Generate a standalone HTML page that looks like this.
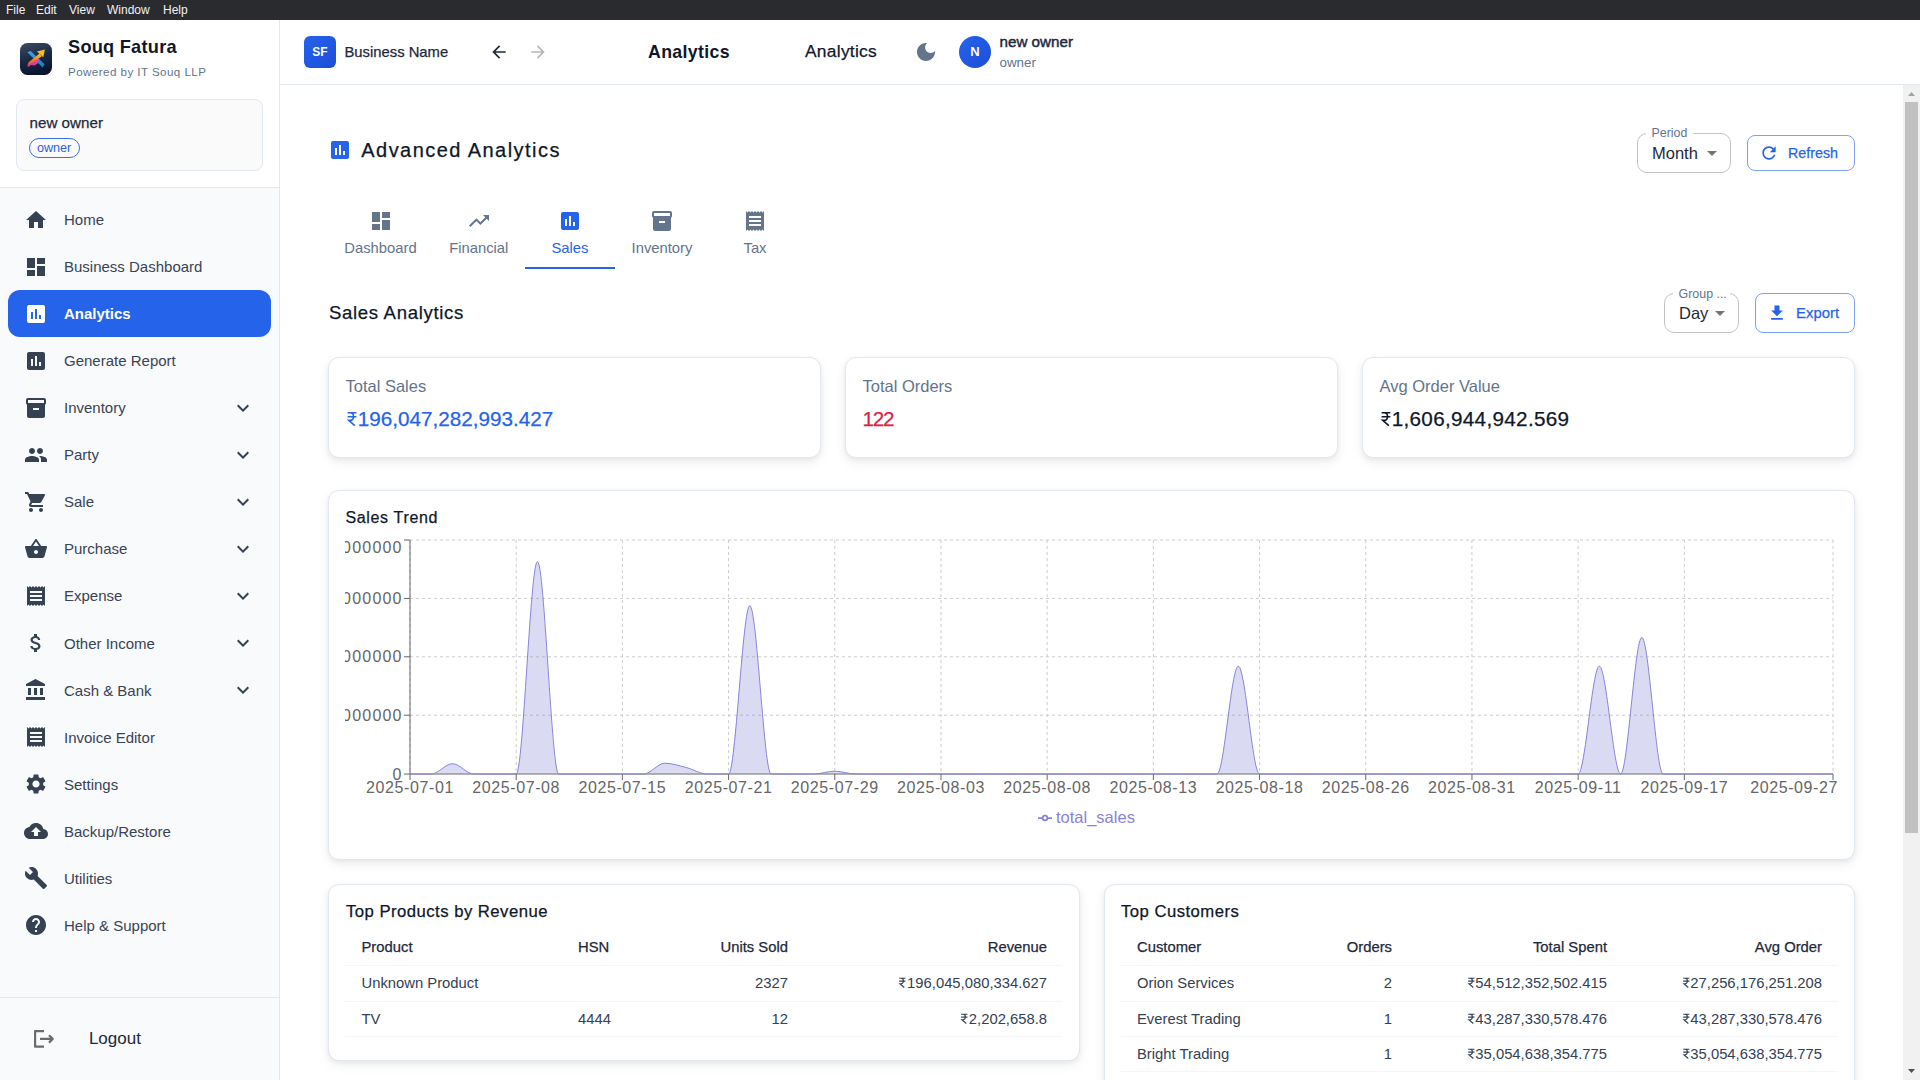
<!DOCTYPE html><html><head><meta charset="utf-8"><title>Souq Fatura - Analytics</title><style>
*{box-sizing:border-box}
html,body{margin:0;padding:0;width:1920px;height:1080px;overflow:hidden;background:#fff;font-family:"Liberation Sans",sans-serif}
.t{position:absolute;white-space:nowrap;line-height:1}
.ic{position:absolute;display:block}
.box{position:absolute}
.inr{display:inline-block;width:0.56em;height:0.74em;vertical-align:0;margin-right:0.03em}
.med{-webkit-text-stroke:0.25px currentColor}
</style></head><body>
<div class="box" style="left:0;top:0;width:1920px;height:20px;background:#2a2b2f"></div>
<div class="t " style="left:6px;top:4px;font-size:12px;color:#f2f2f2;font-weight:400;">File</div>
<div class="t " style="left:36px;top:4px;font-size:12px;color:#f2f2f2;font-weight:400;">Edit</div>
<div class="t " style="left:69px;top:4px;font-size:12px;color:#f2f2f2;font-weight:400;">View</div>
<div class="t " style="left:107px;top:4px;font-size:12px;color:#f2f2f2;font-weight:400;">Window</div>
<div class="t " style="left:163px;top:4px;font-size:12px;color:#f2f2f2;font-weight:400;">Help</div>
<div class="box" style="left:0;top:20px;width:280px;height:1060px;background:#f8fafc;border-right:1px solid #e2e8f0"></div>
<div class="box" style="left:0;top:20px;width:279px;height:168px;background:#fff;border-bottom:1px solid #e2e8f0"></div>
<svg class="ic" style="left:20px;top:43px;width:32px;height:32px" viewBox="0 0 32 32">
<defs><linearGradient id="lg" x1="0" y1="0" x2="0.3" y2="1"><stop offset="0" stop-color="#3b4d63"/><stop offset="0.55" stop-color="#1a2a44"/><stop offset="1" stop-color="#0a1631"/></linearGradient>
<linearGradient id="ar" x1="0" y1="1" x2="1" y2="0"><stop offset="0" stop-color="#ef4d2a"/><stop offset="0.45" stop-color="#f97a22"/><stop offset="1" stop-color="#fcc324"/></linearGradient>
<linearGradient id="bl" x1="0" y1="0" x2="1" y2="1"><stop offset="0" stop-color="#43a0e6"/><stop offset="1" stop-color="#1f78c0"/></linearGradient>
<linearGradient id="mg" x1="0" y1="1" x2="1" y2="0"><stop offset="0" stop-color="#b03a9a"/><stop offset="1" stop-color="#ec4899"/></linearGradient></defs>
<rect x="0" y="0" width="32" height="32" rx="7.5" fill="url(#lg)"/>
<path d="M7.3 9.3 L10.8 7.9 L24.6 21.3 L22.6 24.6 Z" fill="url(#bl)"/>
<path d="M7.4 24.6 L8.4 20.6 L19.4 15.6 L17.6 20.6 L14.6 22.6 L11.2 21.9 Z" fill="url(#mg)"/>
<path d="M7.3 22.8 L8.6 19.2 L19.6 10.6 L21.6 13.4 L9.6 21.2 Z" fill="url(#ar)"/>
<path d="M16.9 8.6 L24.9 6.6 L23.3 14.2 Z" fill="#fbbc24"/>
</svg>
<div class="t " style="left:68px;top:38px;font-size:18.2px;color:#0f172a;font-weight:700;letter-spacing:0.25px">Souq Fatura</div>
<div class="t " style="left:68px;top:66px;font-size:11.6px;color:#64748b;font-weight:400;letter-spacing:0.44px">Powered by IT Souq LLP</div>
<div class="box" style="left:16px;top:99px;width:247px;height:72px;background:#fafafa;border:1px solid #e2e8f0;border-radius:8px"></div>
<div class="t med" style="left:29.5px;top:115px;font-size:15.2px;color:#1e293b;font-weight:400;">new owner</div>
<div class="box" style="left:29px;top:138px;width:51px;height:20px;border:1px solid #3b6ef0;border-radius:10px"></div>
<div class="t " style="left:37px;top:142px;font-size:12.6px;color:#2f5fe0;font-weight:400;">owner</div>
<svg class="ic" style="left:24px;top:208px;width:24px;height:24px" viewBox="0 0 24 24"><path fill="#364152" d="M10 20v-6h4v6h5v-8h3L12 3 2 12h3v8z"/></svg>
<div class="t " style="left:64px;top:212px;font-size:15px;color:#3a4354;font-weight:400;">Home</div>
<svg class="ic" style="left:24px;top:255px;width:24px;height:24px" viewBox="0 0 24 24"><path fill="#364152" d="M3 13h8V3H3v10zm0 8h8v-6H3v6zm10 0h8V11h-8v10zm0-18v6h8V3h-8z"/></svg>
<div class="t " style="left:64px;top:259px;font-size:15px;color:#3a4354;font-weight:400;">Business Dashboard</div>
<div class="box" style="left:8px;top:290px;width:263px;height:47px;background:#2563eb;border-radius:12px"></div>
<svg class="ic" style="left:24px;top:302px;width:24px;height:24px" viewBox="0 0 24 24"><path fill="#ffffff" d="M19 3H5c-1.1 0-2 .9-2 2v14c0 1.1.9 2 2 2h14c1.1 0 2-.9 2-2V5c0-1.1-.9-2-2-2zM9 17H7v-7h2v7zm4 0h-2V7h2v10zm4 0h-2v-4h2v4z"/></svg>
<div class="t " style="left:64px;top:306px;font-size:15px;color:#ffffff;font-weight:700;">Analytics</div>
<svg class="ic" style="left:24px;top:349px;width:24px;height:24px" viewBox="0 0 24 24"><path fill="#364152" d="M19 3H5c-1.1 0-2 .9-2 2v14c0 1.1.9 2 2 2h14c1.1 0 2-.9 2-2V5c0-1.1-.9-2-2-2zM9 17H7v-7h2v7zm4 0h-2V7h2v10zm4 0h-2v-4h2v4z"/></svg>
<div class="t " style="left:64px;top:353px;font-size:15px;color:#3a4354;font-weight:400;">Generate Report</div>
<svg class="ic" style="left:24px;top:396px;width:24px;height:24px" viewBox="0 0 24 24"><path fill="#364152" d="M20 2H4c-1 0-2 .9-2 2v3.01c0 .72.43 1.34 1 1.69V20c0 1.1 1.1 2 2 2h14c.9 0 2-.9 2-2V8.7c.57-.35 1-.97 1-1.69V4c0-1.1-1-2-2-2zm-5 12H9v-2h6v2zm5-7H4V4l16-.02V7z"/></svg>
<div class="t " style="left:64px;top:400px;font-size:15px;color:#3a4354;font-weight:400;">Inventory</div>
<svg class="ic" style="left:231px;top:396px;width:24px;height:24px" viewBox="0 0 24 24"><path fill="#364152" d="M16.59 8.59L12 13.17 7.41 8.59 6 10l6 6 6-6z"/></svg>
<svg class="ic" style="left:24px;top:443px;width:24px;height:24px" viewBox="0 0 24 24"><path fill="#364152" d="M16 11c1.66 0 2.99-1.34 2.99-3S17.66 5 16 5c-1.66 0-3 1.34-3 3s1.34 3 3 3zm-8 0c1.66 0 2.99-1.34 2.99-3S9.66 5 8 5C6.34 5 5 6.34 5 8s1.34 3 3 3zm0 2c-2.33 0-7 1.17-7 3.5V19h14v-2.5c0-2.33-4.67-3.5-7-3.5zm8 0c-.29 0-.62.02-.97.05 1.16.84 1.97 1.97 1.97 3.45V19h6v-2.5c0-2.33-4.67-3.5-7-3.5z"/></svg>
<div class="t " style="left:64px;top:447px;font-size:15px;color:#3a4354;font-weight:400;">Party</div>
<svg class="ic" style="left:231px;top:443px;width:24px;height:24px" viewBox="0 0 24 24"><path fill="#364152" d="M16.59 8.59L12 13.17 7.41 8.59 6 10l6 6 6-6z"/></svg>
<svg class="ic" style="left:24px;top:490px;width:24px;height:24px" viewBox="0 0 24 24"><path fill="#364152" d="M7 18c-1.1 0-1.99.9-1.99 2S5.9 22 7 22s2-.9 2-2-.9-2-2-2zM1 2v2h2l3.6 7.59-1.35 2.45c-.16.28-.25.61-.25.96 0 1.1.9 2 2 2h12v-2H7.42c-.14 0-.25-.11-.25-.25l.03-.12.9-1.63h7.45c.75 0 1.410-.41 1.75-1.03l3.58-6.49c.08-.14.12-.31.12-.48 0-.55-.45-1-1-1H5.21l-.94-2H1zm16 16c-1.1 0-1.99.9-1.99 2s.89 2 1.990 2 2-.9 2-2-.9-2-2-2z"/></svg>
<div class="t " style="left:64px;top:494px;font-size:15px;color:#3a4354;font-weight:400;">Sale</div>
<svg class="ic" style="left:231px;top:490px;width:24px;height:24px" viewBox="0 0 24 24"><path fill="#364152" d="M16.59 8.59L12 13.17 7.41 8.59 6 10l6 6 6-6z"/></svg>
<svg class="ic" style="left:24px;top:537px;width:24px;height:24px" viewBox="0 0 24 24"><path fill="#364152" d="M17.21 9l-4.38-6.56c-.19-.28-.51-.42-.83-.42-.32 0-.64.14-.83.43L6.79 9H2c-.55 0-1 .45-1 1 0 .09.01.18.04.27l2.54 9.27c.23.84 1 1.46 1.92 1.46h13c.92 0 1.690-.62 1.93-1.46l2.54-9.27L23 10c0-.55-.45-1-1-1h-4.79zM9 9l3-4.4L15 9H9zm3 8c-1.1 0-2-.9-2-2s.9-2 2-2 2 .9 2 2-.9 2-2 2z"/></svg>
<div class="t " style="left:64px;top:541px;font-size:15px;color:#3a4354;font-weight:400;">Purchase</div>
<svg class="ic" style="left:231px;top:537px;width:24px;height:24px" viewBox="0 0 24 24"><path fill="#364152" d="M16.59 8.59L12 13.17 7.41 8.59 6 10l6 6 6-6z"/></svg>
<svg class="ic" style="left:24px;top:584px;width:24px;height:24px" viewBox="0 0 24 24"><path fill="#364152" d="M18 17H6v-2h12v2zm0-4H6v-2h12v2zm0-4H6V7h12v2zM3 22l1.5-1.5L6 22l1.5-1.5L9 22l1.5-1.5L12 22l1.5-1.5L15 22l1.5-1.5L18 22l1.5-1.5L21 22V2l-1.5 1.5L18 2l-1.5 1.5L15 2l-1.5 1.5L12 2l-1.5 1.5L9 2 7.5 3.5 6 2 4.5 3.5 3 2v20z"/></svg>
<div class="t " style="left:64px;top:588px;font-size:15px;color:#3a4354;font-weight:400;">Expense</div>
<svg class="ic" style="left:231px;top:584px;width:24px;height:24px" viewBox="0 0 24 24"><path fill="#364152" d="M16.59 8.59L12 13.17 7.41 8.59 6 10l6 6 6-6z"/></svg>
<svg class="ic" style="left:24px;top:631px;width:24px;height:24px" viewBox="0 0 24 24"><path fill="#364152" d="M11.8 10.9c-2.27-.59-3-1.2-3-2.15 0-1.09 1.01-1.85 2.7-1.85 1.78 0 2.44.85 2.5 2.1h2.21c-.07-1.72-1.12-3.3-3.21-3.81V3h-3v2.16c-1.94.42-3.5 1.68-3.5 3.61 0 2.310 1.91 3.46 4.7 4.13 2.5.6 3 1.48 3 2.41 0 .69-.49 1.79-2.7 1.79-2.06 0-2.87-.92-2.98-2.1h-2.2c.12 2.19 1.76 3.42 3.68 3.83V21h3v-2.15c1.95-.37 3.5-1.5 3.5-3.55 0-2.84-2.43-3.81-4.7-4.4z"/></svg>
<div class="t " style="left:64px;top:636px;font-size:15px;color:#3a4354;font-weight:400;">Other Income</div>
<svg class="ic" style="left:231px;top:631px;width:24px;height:24px" viewBox="0 0 24 24"><path fill="#364152" d="M16.59 8.59L12 13.17 7.41 8.59 6 10l6 6 6-6z"/></svg>
<svg class="ic" style="left:24px;top:678px;width:24px;height:24px" viewBox="0 0 24 24"><path fill="#364152" d="M4 10v7h3v-7H4zm6 0v7h3v-7h-3zM2 22h19v-3H2v3zm14-12v7h3v-7h-3zm-4.5-9L2 6v2h19V6l-9.5-5z"/></svg>
<div class="t " style="left:64px;top:683px;font-size:15px;color:#3a4354;font-weight:400;">Cash &amp; Bank</div>
<svg class="ic" style="left:231px;top:678px;width:24px;height:24px" viewBox="0 0 24 24"><path fill="#364152" d="M16.59 8.59L12 13.17 7.41 8.59 6 10l6 6 6-6z"/></svg>
<svg class="ic" style="left:24px;top:725px;width:24px;height:24px" viewBox="0 0 24 24"><path fill="#364152" d="M18 17H6v-2h12v2zm0-4H6v-2h12v2zm0-4H6V7h12v2zM3 22l1.5-1.5L6 22l1.5-1.5L9 22l1.5-1.5L12 22l1.5-1.5L15 22l1.5-1.5L18 22l1.5-1.5L21 22V2l-1.5 1.5L18 2l-1.5 1.5L15 2l-1.5 1.5L12 2l-1.5 1.5L9 2 7.5 3.5 6 2 4.5 3.5 3 2v20z"/></svg>
<div class="t " style="left:64px;top:730px;font-size:15px;color:#3a4354;font-weight:400;">Invoice Editor</div>
<svg class="ic" style="left:24px;top:772px;width:24px;height:24px" viewBox="0 0 24 24"><path fill="#364152" d="M19.14 12.94c.04-.3.06-.61.06-.94 0-.32-.02-.64-.07-.94l2.03-1.58c.18-.14.23-.41.12-.61l-1.92-3.32c-.12-.22-.37-.29-.59-.22l-2.39.96c-.5-.38-1.03-.7-1.62-.94l-.36-2.54c-.04-.24-.24-.41-.48-.41h-3.84c-.24 0-.43.17-.47.41l-.36 2.54c-.59.24-1.13.57-1.62.94l-2.39-.96c-.22-.08-.47 0-.59.22L2.74 8.87c-.12.21-.08.47.12.61l2.03 1.58c-.05.3-.09.63-.09.94s.02.64.07.94l-2.03 1.58c-.18.14-.23.41-.12.61l1.92 3.32c.12.22.37.29.59.22l2.39-.96c.5.38 1.03.7 1.62.94l.36 2.54c.05.24.24.41.48.41h3.84c.24 0 .44-.17.47-.41l.36-2.54c.59-.24 1.13-.56 1.62-.94l2.39.96c.22.08.47 0 .59-.22l1.92-3.32c.12-.22.07-.47-.12-.61l-2.01-1.58zM12 15.6c-1.98 0-3.6-1.62-3.6-3.6s1.62-3.6 3.6-3.6 3.6 1.62 3.6 3.6-1.62 3.6-3.6 3.6z"/></svg>
<div class="t " style="left:64px;top:777px;font-size:15px;color:#3a4354;font-weight:400;">Settings</div>
<svg class="ic" style="left:24px;top:819px;width:24px;height:24px" viewBox="0 0 24 24"><path fill="#364152" d="M19.35 10.04C18.67 6.59 15.64 4 12 4 9.11 4 6.6 5.64 5.35 8.04 2.34 8.36 0 10.91 0 14c0 3.31 2.69 6 6 6h13c2.76 0 5-2.24 5-5 0-2.64-2.05-4.78-4.65-4.96zM14 13v4h-4v-4H7l5-5 5 5h-3z"/></svg>
<div class="t " style="left:64px;top:824px;font-size:15px;color:#3a4354;font-weight:400;">Backup/Restore</div>
<svg class="ic" style="left:24px;top:866px;width:24px;height:24px" viewBox="0 0 24 24"><path fill="#364152" d="M22.7 19l-9.1-9.1c.9-2.3.4-5-1.5-6.9-2-2-5-2.4-7.4-1.3L9 6 6 9 1.6 4.7C.4 7.1.9 10.1 2.9 12.1c1.9 1.9 4.6 2.4 6.9 1.5l9.1 9.1c.4.4 1 .4 1.4 0l2.3-2.3c.5-.4.5-1.1.1-1.4z"/></svg>
<div class="t " style="left:64px;top:871px;font-size:15px;color:#3a4354;font-weight:400;">Utilities</div>
<svg class="ic" style="left:24px;top:913px;width:24px;height:24px" viewBox="0 0 24 24"><path fill="#364152" d="M12 2C6.48 2 2 6.48 2 12s4.48 10 10 10 10-4.48 10-10S17.52 2 12 2zm1 17h-2v-2h2v2zm2.07-7.75l-.9.92C13.45 12.9 13 13.5 13 15h-2v-.5c0-1.1.45-2.1 1.17-2.83l1.24-1.26c.37-.36.59-.86.59-1.41 0-1.1-.9-2-2-2s-2 .9-2 2H8c0-2.21 1.79-4 4-4s4 1.79 4 4c0 .88-.36 1.68-.93 2.25z"/></svg>
<div class="t " style="left:64px;top:918px;font-size:15px;color:#3a4354;font-weight:400;">Help &amp; Support</div>
<div class="box" style="left:0;top:997px;width:279px;height:1px;background:#e2e8f0"></div>
<svg class="ic" style="left:32px;top:1027px;width:24px;height:24px" viewBox="0 0 24 24"><path d="M12 4.1H3.1V19.7H12M8 11.9H20.6M17 8.2L20.7 11.9L17 15.6" fill="none" stroke="#6b6b6b" stroke-width="2.2" stroke-linejoin="round"/></svg>
<div class="t " style="left:88.9px;top:1030px;font-size:17px;color:#1e293b;font-weight:400;">Logout</div>
<div class="box" style="left:280px;top:20px;width:1640px;height:65px;background:#fff;border-bottom:1px solid #e2e8f0"></div>
<div class="box" style="left:304px;top:36px;width:32px;height:32px;border-radius:6px;background:linear-gradient(135deg,#2563eb,#1d4ed8)"></div>
<div class="t" style="left:20px;width:600px;text-align:center;top:46px;font-size:12px;color:#fff;font-weight:700;">SF</div>
<div class="t med" style="left:344.5px;top:45px;font-size:14.8px;color:#1e293b;font-weight:400;">Business Name</div>
<svg class="ic" style="left:488.5px;top:42px;width:20px;height:20px" viewBox="0 0 24 24"><path fill="#1e293b" d="M20 11H7.83l5.59-5.59L12 4l-8 8 8 8 1.41-1.41L7.83 13H20v-2z"/></svg>
<svg class="ic" style="left:527.5px;top:42px;width:20px;height:20px" viewBox="0 0 24 24"><path fill="#b8b8b8" d="M12 4l-1.41 1.41L16.17 11H4v2h12.17l-5.58 5.59L12 20l8-8z"/></svg>
<div class="t " style="left:648px;top:44px;font-size:17.7px;color:#0f172a;font-weight:700;letter-spacing:0.37px">Analytics</div>
<div class="t med" style="left:805px;top:43px;font-size:17.4px;color:#0f172a;font-weight:400;letter-spacing:0.27px">Analytics</div>
<svg class="ic" style="left:914px;top:40px;width:24px;height:24px" viewBox="0 0 24 24"><path fill="#64748b" d="M12 3c-4.97 0-9 4.03-9 9s4.03 9 9 9 9-4.03 9-9c0-.46-.04-.92-.1-1.36-.98 1.37-2.58 2.26-4.4 2.26-2.98 0-5.4-2.42-5.4-5.4 0-1.81.89-3.42 2.26-4.4-.44-.06-.9-.1-1.36-.1z"/></svg>
<div class="box" style="left:959px;top:36px;width:32px;height:32px;border-radius:50%;background:linear-gradient(135deg,#2563eb,#1d4ed8)"></div>
<div class="t" style="left:675px;width:600px;text-align:center;top:45px;font-size:13px;color:#fff;font-weight:700;">N</div>
<div class="t " style="left:999.5px;top:34px;font-size:15.2px;color:#1e293b;font-weight:400;-webkit-text-stroke:0.45px #1e293b">new owner</div>
<div class="t " style="left:999.5px;top:56px;font-size:13.4px;color:#64748b;font-weight:400;">owner</div>
<div class="box" style="left:1903px;top:85px;width:17px;height:995px;background:#f1f1f1"></div>
<div class="box" style="left:1905px;top:102px;width:13px;height:731px;background:#c1c1c1"></div>
<svg class="ic" style="left:1903px;top:85px;width:17px;height:17px" viewBox="0 0 17 17"><path d="M5 11h7l-3.5-4z" fill="#a3a3a3"/></svg>
<svg class="ic" style="left:1903px;top:1063px;width:17px;height:17px" viewBox="0 0 17 17"><path d="M5 6h7l-3.5 4z" fill="#505050"/></svg>
<svg class="ic" style="left:328px;top:138px;width:24px;height:24px" viewBox="0 0 24 24"><path fill="#2563eb" d="M19 3H5c-1.1 0-2 .9-2 2v14c0 1.1.9 2 2 2h14c1.1 0 2-.9 2-2V5c0-1.1-.9-2-2-2zM9 17H7v-7h2v7zm4 0h-2V7h2v10zm4 0h-2v-4h2v4z"/></svg>
<div class="t med" style="left:361.3px;top:140px;font-size:20px;color:#0f172a;font-weight:400;letter-spacing:1.45px">Advanced Analytics</div>
<div class="box" style="left:1637px;top:133px;width:94px;height:40px;border:1px solid #c4c4c4;border-radius:10px"></div>
<div class="box" style="left:1646px;top:128px;width:47px;height:8px;background:#fff"></div>
<div class="t " style="left:1651.5px;top:127px;font-size:12.4px;color:#64748b;font-weight:400;">Period</div>
<div class="t " style="left:1652px;top:145px;font-size:16.5px;color:#1e293b;font-weight:400;">Month</div>
<svg class="ic" style="left:1700px;top:141px;width:24px;height:24px" viewBox="0 0 24 24"><path d="M7 10l5 5 5-5z" fill="#757575"/></svg>
<div class="box" style="left:1747px;top:135px;width:108px;height:36px;border:1px solid #7ea1f3;border-radius:8px"></div>
<svg class="ic" style="left:1759px;top:143px;width:20px;height:20px" viewBox="0 0 24 24"><path fill="#2563eb" d="M17.65 6.35C16.2 4.9 14.21 4 12 4c-4.42 0-7.99 3.58-7.99 8s3.57 8 7.99 8c3.73 0 6.84-2.55 7.73-6h-2.08c-.82 2.33-3.04 4-5.65 4-3.31 0-6-2.69-6-6s2.690-6 6-6c1.66 0 3.14.69 4.22 1.78L13 11h7V4l-2.35 2.35z"/></svg>
<div class="t med" style="left:1788px;top:146px;font-size:14.3px;color:#2563eb;font-weight:400;">Refresh</div>
<svg class="ic" style="left:368.5px;top:209px;width:24px;height:24px" viewBox="0 0 24 24"><path fill="#64748b" d="M3 13h8V3H3v10zm0 8h8v-6H3v6zm10 0h8V11h-8v10zm0-18v6h8V3h-8z"/></svg>
<div class="t" style="left:80.5px;width:600px;text-align:center;top:241px;font-size:14.8px;color:#64748b;font-weight:400;">Dashboard</div>
<svg class="ic" style="left:466.75px;top:209px;width:24px;height:24px" viewBox="0 0 24 24"><path fill="#64748b" d="M16 6l2.29 2.29-4.88 4.88-4-4L2 16.59 3.41 18l6-6 4 4 6.3-6.29L22 12V6z"/></svg>
<div class="t" style="left:178.75px;width:600px;text-align:center;top:241px;font-size:14.8px;color:#64748b;font-weight:400;">Financial</div>
<svg class="ic" style="left:558px;top:209px;width:24px;height:24px" viewBox="0 0 24 24"><path fill="#2563eb" d="M19 3H5c-1.1 0-2 .9-2 2v14c0 1.1.9 2 2 2h14c1.1 0 2-.9 2-2V5c0-1.1-.9-2-2-2zM9 17H7v-7h2v7zm4 0h-2V7h2v10zm4 0h-2v-4h2v4z"/></svg>
<div class="t" style="left:270px;width:600px;text-align:center;top:241px;font-size:14.8px;color:#2563eb;font-weight:400;">Sales</div>
<svg class="ic" style="left:650px;top:209px;width:24px;height:24px" viewBox="0 0 24 24"><path fill="#64748b" d="M20 2H4c-1 0-2 .9-2 2v3.01c0 .72.43 1.34 1 1.69V20c0 1.1 1.1 2 2 2h14c.9 0 2-.9 2-2V8.7c.57-.35 1-.97 1-1.69V4c0-1.1-1-2-2-2zm-5 12H9v-2h6v2zm5-7H4V4l16-.02V7z"/></svg>
<div class="t" style="left:362px;width:600px;text-align:center;top:241px;font-size:14.8px;color:#64748b;font-weight:400;">Inventory</div>
<svg class="ic" style="left:743px;top:209px;width:24px;height:24px" viewBox="0 0 24 24"><path fill="#64748b" d="M18 17H6v-2h12v2zm0-4H6v-2h12v2zm0-4H6V7h12v2zM3 22l1.5-1.5L6 22l1.5-1.5L9 22l1.5-1.5L12 22l1.5-1.5L15 22l1.5-1.5L18 22l1.5-1.5L21 22V2l-1.5 1.5L18 2l-1.5 1.5L15 2l-1.5 1.5L12 2l-1.5 1.5L9 2 7.5 3.5 6 2 4.5 3.5 3 2v20z"/></svg>
<div class="t" style="left:455px;width:600px;text-align:center;top:241px;font-size:14.8px;color:#64748b;font-weight:400;">Tax</div>
<div class="box" style="left:525px;top:266.5px;width:90px;height:2px;background:#2563eb"></div>
<div class="t med" style="left:329px;top:304px;font-size:18.6px;color:#0f172a;font-weight:400;letter-spacing:0.66px">Sales Analytics</div>
<div class="box" style="left:1664px;top:293px;width:75px;height:40px;border:1px solid #c4c4c4;border-radius:10px"></div>
<div class="box" style="left:1673px;top:288px;width:57px;height:8px;background:#fff"></div>
<div class="t " style="left:1678.6px;top:288px;font-size:12.4px;color:#64748b;font-weight:400;">Group ...</div>
<div class="t " style="left:1679px;top:305px;font-size:16.5px;color:#1e293b;font-weight:400;">Day</div>
<svg class="ic" style="left:1708px;top:301px;width:24px;height:24px" viewBox="0 0 24 24"><path d="M7 10l5 5 5-5z" fill="#757575"/></svg>
<div class="box" style="left:1755px;top:293px;width:100px;height:40px;border:1px solid #7ea1f3;border-radius:8px"></div>
<svg class="ic" style="left:1767px;top:303px;width:20px;height:20px" viewBox="0 0 24 24"><path fill="#2563eb" d="M19 9h-4V3H9v6H5l7 7 7-7zM5 18v2h14v-2H5z"/></svg>
<div class="t med" style="left:1796px;top:306px;font-size:14.9px;color:#2563eb;font-weight:400;">Export</div>
<div class="box" style="left:328px;top:357px;width:493px;height:101px;border:1px solid #e2e8f0;border-radius:11px;background:#fff;box-shadow:0 2px 4px rgba(15,23,42,0.05),0 4px 12px rgba(15,23,42,0.07)"></div>
<div class="t " style="left:345.5px;top:378px;font-size:16.5px;color:#64748b;font-weight:400;">Total Sales</div>
<div class="t med" style="left:345.5px;top:409px;font-size:20.7px;color:#2563eb;font-weight:400;"><svg class="inr" viewBox="0 0 10 14"><path d="M1.2 1.6H9.2M1.2 5.2H9.2M1.2 1.6H3.6C7.6 1.6 7.6 8.6 3.6 8.6H2.2L7.8 13.4" fill="none" stroke="currentColor" stroke-width="1.45"/></svg>196,047,282,993.427</div>
<div class="box" style="left:845px;top:357px;width:493px;height:101px;border:1px solid #e2e8f0;border-radius:11px;background:#fff;box-shadow:0 2px 4px rgba(15,23,42,0.05),0 4px 12px rgba(15,23,42,0.07)"></div>
<div class="t " style="left:862.5px;top:378px;font-size:16.5px;color:#64748b;font-weight:400;">Total Orders</div>
<div class="t med" style="left:862.5px;top:409px;font-size:20.7px;color:#e11d48;font-weight:400;letter-spacing:-1.3px">122</div>
<div class="box" style="left:1362px;top:357px;width:493px;height:101px;border:1px solid #e2e8f0;border-radius:11px;background:#fff;box-shadow:0 2px 4px rgba(15,23,42,0.05),0 4px 12px rgba(15,23,42,0.07)"></div>
<div class="t " style="left:1379.5px;top:378px;font-size:16.5px;color:#64748b;font-weight:400;">Avg Order Value</div>
<div class="t med" style="left:1379.5px;top:409px;font-size:20.7px;color:#0f172a;font-weight:400;letter-spacing:0.3px"><svg class="inr" viewBox="0 0 10 14"><path d="M1.2 1.6H9.2M1.2 5.2H9.2M1.2 1.6H3.6C7.6 1.6 7.6 8.6 3.6 8.6H2.2L7.8 13.4" fill="none" stroke="currentColor" stroke-width="1.45"/></svg>1,606,944,942.569</div>
<div class="box" style="left:328px;top:490px;width:1527px;height:370px;border:1px solid #e2e8f0;border-radius:11px;background:#fff;box-shadow:0 2px 4px rgba(15,23,42,0.05),0 4px 12px rgba(15,23,42,0.07)"></div>
<div class="t med" style="left:345.5px;top:510px;font-size:16px;color:#0f172a;font-weight:400;letter-spacing:0.65px">Sales Trend</div>
<svg class="ic" style="left:345px;top:525px;width:1500px;height:325px;overflow:hidden" viewBox="345 525 1500 325">
<line x1="410.0" y1="540.0" x2="1833.0" y2="540.0" stroke="#ccc" stroke-dasharray="3 3"/>
<line x1="410.0" y1="598.4" x2="1833.0" y2="598.4" stroke="#ccc" stroke-dasharray="3 3"/>
<line x1="410.0" y1="656.8" x2="1833.0" y2="656.8" stroke="#ccc" stroke-dasharray="3 3"/>
<line x1="410.0" y1="715.2" x2="1833.0" y2="715.2" stroke="#ccc" stroke-dasharray="3 3"/>
<line x1="410.00" y1="540" x2="410.00" y2="774.0" stroke="#ccc" stroke-dasharray="3 3"/>
<line x1="516.19" y1="540" x2="516.19" y2="774.0" stroke="#ccc" stroke-dasharray="3 3"/>
<line x1="622.39" y1="540" x2="622.39" y2="774.0" stroke="#ccc" stroke-dasharray="3 3"/>
<line x1="728.58" y1="540" x2="728.58" y2="774.0" stroke="#ccc" stroke-dasharray="3 3"/>
<line x1="834.78" y1="540" x2="834.78" y2="774.0" stroke="#ccc" stroke-dasharray="3 3"/>
<line x1="940.97" y1="540" x2="940.97" y2="774.0" stroke="#ccc" stroke-dasharray="3 3"/>
<line x1="1047.16" y1="540" x2="1047.16" y2="774.0" stroke="#ccc" stroke-dasharray="3 3"/>
<line x1="1153.36" y1="540" x2="1153.36" y2="774.0" stroke="#ccc" stroke-dasharray="3 3"/>
<line x1="1259.55" y1="540" x2="1259.55" y2="774.0" stroke="#ccc" stroke-dasharray="3 3"/>
<line x1="1365.75" y1="540" x2="1365.75" y2="774.0" stroke="#ccc" stroke-dasharray="3 3"/>
<line x1="1471.94" y1="540" x2="1471.94" y2="774.0" stroke="#ccc" stroke-dasharray="3 3"/>
<line x1="1578.13" y1="540" x2="1578.13" y2="774.0" stroke="#ccc" stroke-dasharray="3 3"/>
<line x1="1684.33" y1="540" x2="1684.33" y2="774.0" stroke="#ccc" stroke-dasharray="3 3"/>
<line x1="1833.00" y1="540" x2="1833.00" y2="774.0" stroke="#ccc" stroke-dasharray="3 3"/>
<line x1="410.0" y1="540" x2="410.0" y2="774.0" stroke="#666"/>
<line x1="410.0" y1="774.0" x2="1833.0" y2="774.0" stroke="#666"/>
<line x1="404.0" y1="540.0" x2="410.0" y2="540.0" stroke="#666"/>
<line x1="404.0" y1="598.4" x2="410.0" y2="598.4" stroke="#666"/>
<line x1="404.0" y1="656.8" x2="410.0" y2="656.8" stroke="#666"/>
<line x1="404.0" y1="715.2" x2="410.0" y2="715.2" stroke="#666"/>
<line x1="404.0" y1="774.0" x2="410.0" y2="774.0" stroke="#666"/>
<line x1="410.00" y1="774.0" x2="410.00" y2="780.0" stroke="#666"/>
<line x1="516.19" y1="774.0" x2="516.19" y2="780.0" stroke="#666"/>
<line x1="622.39" y1="774.0" x2="622.39" y2="780.0" stroke="#666"/>
<line x1="728.58" y1="774.0" x2="728.58" y2="780.0" stroke="#666"/>
<line x1="834.78" y1="774.0" x2="834.78" y2="780.0" stroke="#666"/>
<line x1="940.97" y1="774.0" x2="940.97" y2="780.0" stroke="#666"/>
<line x1="1047.16" y1="774.0" x2="1047.16" y2="780.0" stroke="#666"/>
<line x1="1153.36" y1="774.0" x2="1153.36" y2="780.0" stroke="#666"/>
<line x1="1259.55" y1="774.0" x2="1259.55" y2="780.0" stroke="#666"/>
<line x1="1365.75" y1="774.0" x2="1365.75" y2="780.0" stroke="#666"/>
<line x1="1471.94" y1="774.0" x2="1471.94" y2="780.0" stroke="#666"/>
<line x1="1578.13" y1="774.0" x2="1578.13" y2="780.0" stroke="#666"/>
<line x1="1684.33" y1="774.0" x2="1684.33" y2="780.0" stroke="#666"/>
<line x1="1833.00" y1="774.0" x2="1833.00" y2="780.0" stroke="#666"/>
<path d="M410.00,774.00 C417.08,774.00 424.16,774.00 431.24,774.00 C438.32,774.00 445.40,763.70 452.48,763.70 C459.56,763.70 466.64,774.00 473.72,774.00 C480.80,774.00 487.88,774.00 494.96,774.00 C502.03,774.00 509.11,774.00 516.19,774.00 C523.27,774.00 530.35,561.70 537.43,561.70 C544.51,561.70 551.59,774.00 558.67,774.00 C565.75,774.00 572.83,774.00 579.91,774.00 C586.99,774.00 594.07,774.00 601.15,774.00 C608.23,774.00 615.31,774.00 622.39,774.00 C629.47,774.00 636.55,774.00 643.63,774.00 C650.71,774.00 657.79,763.20 664.87,763.20 C671.95,763.20 679.02,765.70 686.10,767.50 C693.18,769.30 700.26,774.00 707.34,774.00 C714.42,774.00 721.50,774.00 728.58,774.00 C735.66,774.00 742.74,605.70 749.82,605.70 C756.90,605.70 763.98,774.00 771.06,774.00 C778.14,774.00 785.22,774.00 792.30,774.00 C799.38,774.00 806.46,774.00 813.54,774.00 C820.62,774.00 827.70,771.20 834.78,771.20 C841.86,771.20 848.94,774.00 856.01,774.00 C863.09,774.00 870.17,774.00 877.25,774.00 C884.33,774.00 891.41,774.00 898.49,774.00 C905.57,774.00 912.65,774.00 919.73,774.00 C926.81,774.00 933.89,774.00 940.97,774.00 C948.05,774.00 955.13,774.00 962.21,774.00 C969.29,774.00 976.37,774.00 983.45,774.00 C990.53,774.00 997.61,774.00 1004.69,774.00 C1011.77,774.00 1018.85,774.00 1025.93,774.00 C1033.00,774.00 1040.08,774.00 1047.16,774.00 C1054.24,774.00 1061.32,774.00 1068.40,774.00 C1075.48,774.00 1082.56,774.00 1089.64,774.00 C1096.72,774.00 1103.80,774.00 1110.88,774.00 C1117.96,774.00 1125.04,774.00 1132.12,774.00 C1139.20,774.00 1146.28,774.00 1153.36,774.00 C1160.44,774.00 1167.52,774.00 1174.60,774.00 C1181.68,774.00 1188.76,774.00 1195.84,774.00 C1202.92,774.00 1210.00,774.00 1217.07,774.00 C1224.15,774.00 1231.23,666.20 1238.31,666.20 C1245.39,666.20 1252.47,774.00 1259.55,774.00 C1266.63,774.00 1273.71,774.00 1280.79,774.00 C1287.87,774.00 1294.95,774.00 1302.03,774.00 C1309.11,774.00 1316.19,774.00 1323.27,774.00 C1330.35,774.00 1337.43,774.00 1344.51,774.00 C1351.59,774.00 1358.67,774.00 1365.75,774.00 C1372.83,774.00 1379.91,774.00 1386.99,774.00 C1394.06,774.00 1401.14,774.00 1408.22,774.00 C1415.30,774.00 1422.38,774.00 1429.46,774.00 C1436.54,774.00 1443.62,774.00 1450.70,774.00 C1457.78,774.00 1464.86,774.00 1471.94,774.00 C1479.02,774.00 1486.10,774.00 1493.18,774.00 C1500.26,774.00 1507.34,774.00 1514.42,774.00 C1521.50,774.00 1528.58,774.00 1535.66,774.00 C1542.74,774.00 1549.82,774.00 1556.90,774.00 C1563.98,774.00 1571.05,774.00 1578.13,774.00 C1585.21,774.00 1592.29,666.20 1599.37,666.20 C1606.45,666.20 1613.53,774.00 1620.61,774.00 C1627.69,774.00 1634.77,637.50 1641.85,637.50 C1648.93,637.50 1656.01,774.00 1663.09,774.00 C1670.17,774.00 1677.25,774.00 1684.33,774.00 C1691.41,774.00 1698.49,774.00 1705.57,774.00 C1712.65,774.00 1719.73,774.00 1726.81,774.00 C1733.89,774.00 1740.97,774.00 1748.04,774.00 C1755.12,774.00 1762.20,774.00 1769.28,774.00 C1776.36,774.00 1783.44,774.00 1790.52,774.00 C1797.60,774.00 1804.68,774.00 1811.76,774.00 C1818.84,774.00 1825.92,774.00 1833.00,774.00 L1833.00,774.00 L410.00,774.00 Z" fill="#8884d8" fill-opacity="0.3" stroke="none"/>
<path d="M410.00,774.00 C417.08,774.00 424.16,774.00 431.24,774.00 C438.32,774.00 445.40,763.70 452.48,763.70 C459.56,763.70 466.64,774.00 473.72,774.00 C480.80,774.00 487.88,774.00 494.96,774.00 C502.03,774.00 509.11,774.00 516.19,774.00 C523.27,774.00 530.35,561.70 537.43,561.70 C544.51,561.70 551.59,774.00 558.67,774.00 C565.75,774.00 572.83,774.00 579.91,774.00 C586.99,774.00 594.07,774.00 601.15,774.00 C608.23,774.00 615.31,774.00 622.39,774.00 C629.47,774.00 636.55,774.00 643.63,774.00 C650.71,774.00 657.79,763.20 664.87,763.20 C671.95,763.20 679.02,765.70 686.10,767.50 C693.18,769.30 700.26,774.00 707.34,774.00 C714.42,774.00 721.50,774.00 728.58,774.00 C735.66,774.00 742.74,605.70 749.82,605.70 C756.90,605.70 763.98,774.00 771.06,774.00 C778.14,774.00 785.22,774.00 792.30,774.00 C799.38,774.00 806.46,774.00 813.54,774.00 C820.62,774.00 827.70,771.20 834.78,771.20 C841.86,771.20 848.94,774.00 856.01,774.00 C863.09,774.00 870.17,774.00 877.25,774.00 C884.33,774.00 891.41,774.00 898.49,774.00 C905.57,774.00 912.65,774.00 919.73,774.00 C926.81,774.00 933.89,774.00 940.97,774.00 C948.05,774.00 955.13,774.00 962.21,774.00 C969.29,774.00 976.37,774.00 983.45,774.00 C990.53,774.00 997.61,774.00 1004.69,774.00 C1011.77,774.00 1018.85,774.00 1025.93,774.00 C1033.00,774.00 1040.08,774.00 1047.16,774.00 C1054.24,774.00 1061.32,774.00 1068.40,774.00 C1075.48,774.00 1082.56,774.00 1089.64,774.00 C1096.72,774.00 1103.80,774.00 1110.88,774.00 C1117.96,774.00 1125.04,774.00 1132.12,774.00 C1139.20,774.00 1146.28,774.00 1153.36,774.00 C1160.44,774.00 1167.52,774.00 1174.60,774.00 C1181.68,774.00 1188.76,774.00 1195.84,774.00 C1202.92,774.00 1210.00,774.00 1217.07,774.00 C1224.15,774.00 1231.23,666.20 1238.31,666.20 C1245.39,666.20 1252.47,774.00 1259.55,774.00 C1266.63,774.00 1273.71,774.00 1280.79,774.00 C1287.87,774.00 1294.95,774.00 1302.03,774.00 C1309.11,774.00 1316.19,774.00 1323.27,774.00 C1330.35,774.00 1337.43,774.00 1344.51,774.00 C1351.59,774.00 1358.67,774.00 1365.75,774.00 C1372.83,774.00 1379.91,774.00 1386.99,774.00 C1394.06,774.00 1401.14,774.00 1408.22,774.00 C1415.30,774.00 1422.38,774.00 1429.46,774.00 C1436.54,774.00 1443.62,774.00 1450.70,774.00 C1457.78,774.00 1464.86,774.00 1471.94,774.00 C1479.02,774.00 1486.10,774.00 1493.18,774.00 C1500.26,774.00 1507.34,774.00 1514.42,774.00 C1521.50,774.00 1528.58,774.00 1535.66,774.00 C1542.74,774.00 1549.82,774.00 1556.90,774.00 C1563.98,774.00 1571.05,774.00 1578.13,774.00 C1585.21,774.00 1592.29,666.20 1599.37,666.20 C1606.45,666.20 1613.53,774.00 1620.61,774.00 C1627.69,774.00 1634.77,637.50 1641.85,637.50 C1648.93,637.50 1656.01,774.00 1663.09,774.00 C1670.17,774.00 1677.25,774.00 1684.33,774.00 C1691.41,774.00 1698.49,774.00 1705.57,774.00 C1712.65,774.00 1719.73,774.00 1726.81,774.00 C1733.89,774.00 1740.97,774.00 1748.04,774.00 C1755.12,774.00 1762.20,774.00 1769.28,774.00 C1776.36,774.00 1783.44,774.00 1790.52,774.00 C1797.60,774.00 1804.68,774.00 1811.76,774.00 C1818.84,774.00 1825.92,774.00 1833.00,774.00" fill="none" stroke="#8884d8" stroke-width="1"/>
<text x="410.00" y="793" text-anchor="middle" font-size="16" letter-spacing="0.6" fill="#666" font-family="Liberation Sans">2025-07-01</text>
<text x="516.19" y="793" text-anchor="middle" font-size="16" letter-spacing="0.6" fill="#666" font-family="Liberation Sans">2025-07-08</text>
<text x="622.39" y="793" text-anchor="middle" font-size="16" letter-spacing="0.6" fill="#666" font-family="Liberation Sans">2025-07-15</text>
<text x="728.58" y="793" text-anchor="middle" font-size="16" letter-spacing="0.6" fill="#666" font-family="Liberation Sans">2025-07-21</text>
<text x="834.78" y="793" text-anchor="middle" font-size="16" letter-spacing="0.6" fill="#666" font-family="Liberation Sans">2025-07-29</text>
<text x="940.97" y="793" text-anchor="middle" font-size="16" letter-spacing="0.6" fill="#666" font-family="Liberation Sans">2025-08-03</text>
<text x="1047.16" y="793" text-anchor="middle" font-size="16" letter-spacing="0.6" fill="#666" font-family="Liberation Sans">2025-08-08</text>
<text x="1153.36" y="793" text-anchor="middle" font-size="16" letter-spacing="0.6" fill="#666" font-family="Liberation Sans">2025-08-13</text>
<text x="1259.55" y="793" text-anchor="middle" font-size="16" letter-spacing="0.6" fill="#666" font-family="Liberation Sans">2025-08-18</text>
<text x="1365.75" y="793" text-anchor="middle" font-size="16" letter-spacing="0.6" fill="#666" font-family="Liberation Sans">2025-08-26</text>
<text x="1471.94" y="793" text-anchor="middle" font-size="16" letter-spacing="0.6" fill="#666" font-family="Liberation Sans">2025-08-31</text>
<text x="1578.13" y="793" text-anchor="middle" font-size="16" letter-spacing="0.6" fill="#666" font-family="Liberation Sans">2025-09-11</text>
<text x="1684.33" y="793" text-anchor="middle" font-size="16" letter-spacing="0.6" fill="#666" font-family="Liberation Sans">2025-09-17</text>
<text x="1838" y="793" text-anchor="end" font-size="16" letter-spacing="0.6" fill="#666" font-family="Liberation Sans">2025-09-27</text>
<text x="402.7" y="552.6" text-anchor="end" font-size="16" letter-spacing="1.2" fill="#666" font-family="Liberation Sans">8000000000</text>
<text x="402.7" y="603.7" text-anchor="end" font-size="16" letter-spacing="1.2" fill="#666" font-family="Liberation Sans">6000000000</text>
<text x="402.7" y="662.3" text-anchor="end" font-size="16" letter-spacing="1.2" fill="#666" font-family="Liberation Sans">4000000000</text>
<text x="402.7" y="720.7" text-anchor="end" font-size="16" letter-spacing="1.2" fill="#666" font-family="Liberation Sans">2000000000</text>
<text x="402.7" y="779.7" text-anchor="end" font-size="16" letter-spacing="1.2" fill="#666" font-family="Liberation Sans">0</text>
<g transform="translate(1038,811)"><svg width="14" height="14" viewBox="0 0 32 32"><path stroke-width="4" fill="none" stroke="#8884d8" d="M0,16h10.666666666666666 A5.333333333333333,5.333333333333333,0,1,1,21.333333333333332,16 H32M21.333333333333332,16 A5.333333333333333,5.333333333333333,0,1,1,10.666666666666666,16"/></svg></g>
<text x="1056" y="823" font-size="16.5" fill="#8884d8" font-family="Liberation Sans">total_sales</text>
</svg>
<div class="box" style="left:328px;top:884px;width:752px;height:177px;border:1px solid #e2e8f0;border-radius:11px;background:#fff;box-shadow:0 2px 4px rgba(15,23,42,0.05),0 4px 12px rgba(15,23,42,0.07)"></div>
<div class="box" style="left:1104px;top:884px;width:751px;height:230px;border:1px solid #e2e8f0;border-radius:11px;background:#fff;box-shadow:0 2px 4px rgba(15,23,42,0.05),0 4px 12px rgba(15,23,42,0.07)"></div>
<div class="t med" style="left:346px;top:904px;font-size:16.7px;color:#0f172a;font-weight:400;letter-spacing:0.47px">Top Products by Revenue</div>
<div class="t med" style="left:1121px;top:904px;font-size:16.7px;color:#0f172a;font-weight:400;letter-spacing:0.47px">Top Customers</div>
<div class="box" style="left:345px;top:965px;width:717px;height:1px;background:#f4f6f9"></div>
<div class="box" style="left:345px;top:1001px;width:717px;height:1px;background:#f4f6f9"></div>
<div class="box" style="left:345px;top:1036px;width:717px;height:1px;background:#f4f6f9"></div>
<div class="box" style="left:1121px;top:965px;width:717px;height:1px;background:#f4f6f9"></div>
<div class="box" style="left:1121px;top:1001px;width:717px;height:1px;background:#f4f6f9"></div>
<div class="box" style="left:1121px;top:1036px;width:717px;height:1px;background:#f4f6f9"></div>
<div class="box" style="left:1121px;top:1071px;width:717px;height:1px;background:#f4f6f9"></div>
<div class="t med" style="left:361.5px;top:940px;font-size:14.8px;color:#1e293b;font-weight:400;">Product</div>
<div class="t med" style="left:578px;top:940px;font-size:14.8px;color:#1e293b;font-weight:400;">HSN</div>
<div class="t" style="right:1132px;top:940px;font-size:14.8px;color:#1e293b;font-weight:400;-webkit-text-stroke:0.25px #1e293b">Units Sold</div>
<div class="t" style="right:873px;top:940px;font-size:14.8px;color:#1e293b;font-weight:400;-webkit-text-stroke:0.25px #1e293b">Revenue</div>
<div class="t " style="left:361.5px;top:976px;font-size:14.8px;color:#334155;font-weight:400;">Unknown Product</div>
<div class="t" style="right:1132px;top:976px;font-size:14.8px;color:#334155;font-weight:400;">2327</div>
<div class="t" style="right:873px;top:976px;font-size:14.8px;color:#334155;font-weight:400;"><svg class="inr" viewBox="0 0 10 14"><path d="M1.2 1.6H9.2M1.2 5.2H9.2M1.2 1.6H3.6C7.6 1.6 7.6 8.6 3.6 8.6H2.2L7.8 13.4" fill="none" stroke="currentColor" stroke-width="1.45"/></svg>196,045,080,334.627</div>
<div class="t " style="left:361.5px;top:1012px;font-size:14.8px;color:#334155;font-weight:400;">TV</div>
<div class="t " style="left:578px;top:1012px;font-size:14.8px;color:#334155;font-weight:400;">4444</div>
<div class="t" style="right:1132px;top:1012px;font-size:14.8px;color:#334155;font-weight:400;">12</div>
<div class="t" style="right:873px;top:1012px;font-size:14.8px;color:#334155;font-weight:400;"><svg class="inr" viewBox="0 0 10 14"><path d="M1.2 1.6H9.2M1.2 5.2H9.2M1.2 1.6H3.6C7.6 1.6 7.6 8.6 3.6 8.6H2.2L7.8 13.4" fill="none" stroke="currentColor" stroke-width="1.45"/></svg>2,202,658.8</div>
<div class="t med" style="left:1137px;top:940px;font-size:14.8px;color:#1e293b;font-weight:400;">Customer</div>
<div class="t" style="right:528px;top:940px;font-size:14.8px;color:#1e293b;font-weight:400;-webkit-text-stroke:0.25px #1e293b">Orders</div>
<div class="t" style="right:313px;top:940px;font-size:14.8px;color:#1e293b;font-weight:400;-webkit-text-stroke:0.25px #1e293b">Total Spent</div>
<div class="t" style="right:98px;top:940px;font-size:14.8px;color:#1e293b;font-weight:400;-webkit-text-stroke:0.25px #1e293b">Avg Order</div>
<div class="t " style="left:1137px;top:976px;font-size:14.8px;color:#334155;font-weight:400;">Orion Services</div>
<div class="t" style="right:528px;top:976px;font-size:14.8px;color:#334155;font-weight:400;">2</div>
<div class="t" style="right:313px;top:976px;font-size:14.8px;color:#334155;font-weight:400;"><svg class="inr" viewBox="0 0 10 14"><path d="M1.2 1.6H9.2M1.2 5.2H9.2M1.2 1.6H3.6C7.6 1.6 7.6 8.6 3.6 8.6H2.2L7.8 13.4" fill="none" stroke="currentColor" stroke-width="1.45"/></svg>54,512,352,502.415</div>
<div class="t" style="right:98px;top:976px;font-size:14.8px;color:#334155;font-weight:400;"><svg class="inr" viewBox="0 0 10 14"><path d="M1.2 1.6H9.2M1.2 5.2H9.2M1.2 1.6H3.6C7.6 1.6 7.6 8.6 3.6 8.6H2.2L7.8 13.4" fill="none" stroke="currentColor" stroke-width="1.45"/></svg>27,256,176,251.208</div>
<div class="t " style="left:1137px;top:1012px;font-size:14.8px;color:#334155;font-weight:400;">Everest Trading</div>
<div class="t" style="right:528px;top:1012px;font-size:14.8px;color:#334155;font-weight:400;">1</div>
<div class="t" style="right:313px;top:1012px;font-size:14.8px;color:#334155;font-weight:400;"><svg class="inr" viewBox="0 0 10 14"><path d="M1.2 1.6H9.2M1.2 5.2H9.2M1.2 1.6H3.6C7.6 1.6 7.6 8.6 3.6 8.6H2.2L7.8 13.4" fill="none" stroke="currentColor" stroke-width="1.45"/></svg>43,287,330,578.476</div>
<div class="t" style="right:98px;top:1012px;font-size:14.8px;color:#334155;font-weight:400;"><svg class="inr" viewBox="0 0 10 14"><path d="M1.2 1.6H9.2M1.2 5.2H9.2M1.2 1.6H3.6C7.6 1.6 7.6 8.6 3.6 8.6H2.2L7.8 13.4" fill="none" stroke="currentColor" stroke-width="1.45"/></svg>43,287,330,578.476</div>
<div class="t " style="left:1137px;top:1047px;font-size:14.8px;color:#334155;font-weight:400;">Bright Trading</div>
<div class="t" style="right:528px;top:1047px;font-size:14.8px;color:#334155;font-weight:400;">1</div>
<div class="t" style="right:313px;top:1047px;font-size:14.8px;color:#334155;font-weight:400;"><svg class="inr" viewBox="0 0 10 14"><path d="M1.2 1.6H9.2M1.2 5.2H9.2M1.2 1.6H3.6C7.6 1.6 7.6 8.6 3.6 8.6H2.2L7.8 13.4" fill="none" stroke="currentColor" stroke-width="1.45"/></svg>35,054,638,354.775</div>
<div class="t" style="right:98px;top:1047px;font-size:14.8px;color:#334155;font-weight:400;"><svg class="inr" viewBox="0 0 10 14"><path d="M1.2 1.6H9.2M1.2 5.2H9.2M1.2 1.6H3.6C7.6 1.6 7.6 8.6 3.6 8.6H2.2L7.8 13.4" fill="none" stroke="currentColor" stroke-width="1.45"/></svg>35,054,638,354.775</div>
</body></html>
